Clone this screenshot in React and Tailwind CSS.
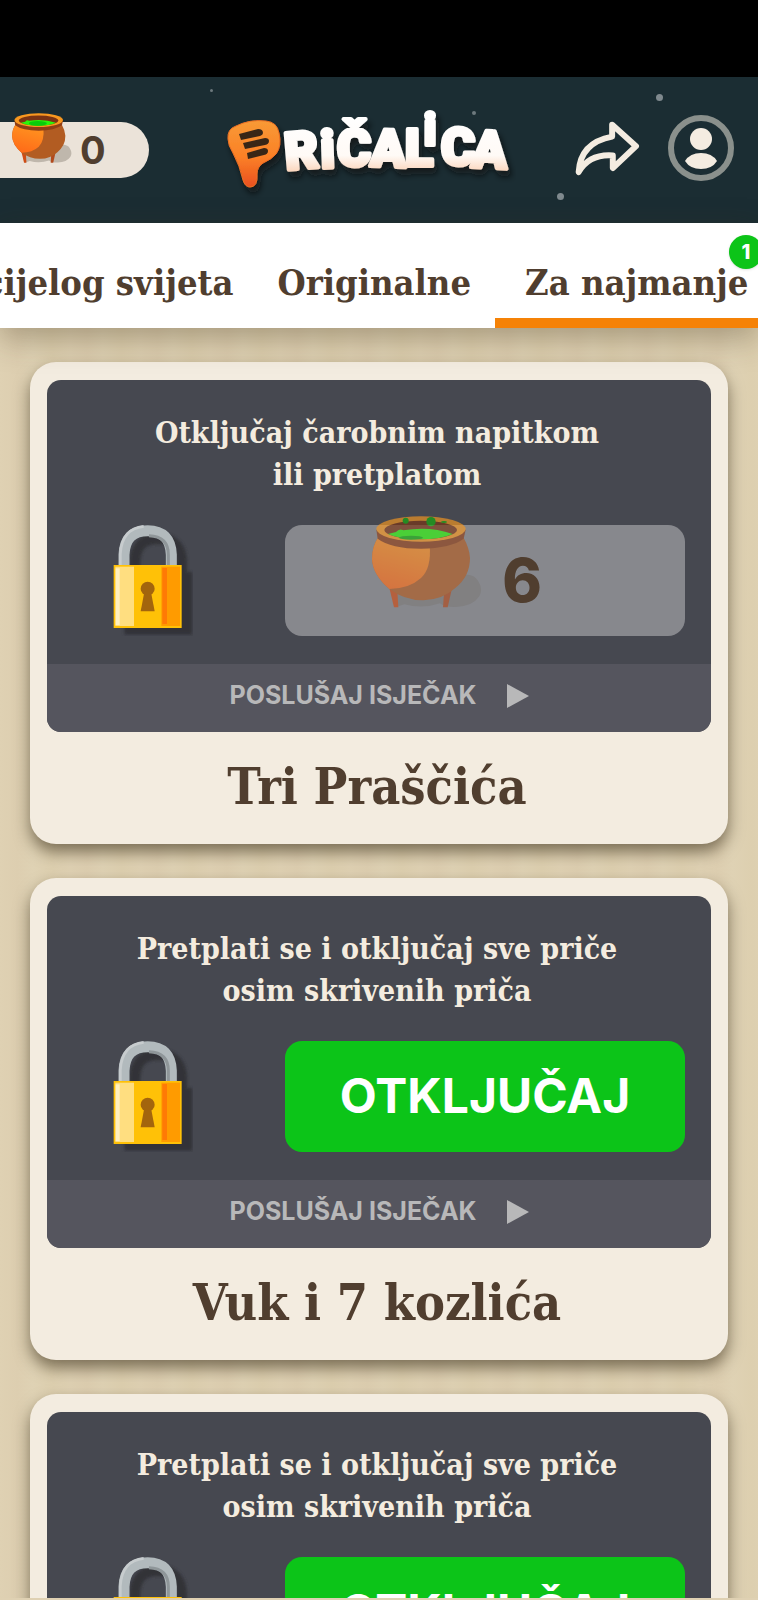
import { useId } from 'react';

const STORIES = [
  {
    title: 'Tri Praščića',
    lines: ['Otključaj čarobnim napitkom', 'ili pretplatom'],
    price: 6,
  },
  {
    title: 'Vuk i 7 kozlića',
    lines: ['Pretplati se i otključaj sve priče', 'osim skrivenih priča'],
  },
  {
    title: 'Crvenkapica',
    lines: ['Pretplati se i otključaj sve priče', 'osim skrivenih priča'],
  },
];

function Pot({ className, bubbles }) {
  const id = useId();

  return (
    <svg viewBox="38 104 330 276" className={className} aria-hidden="true">
      <defs>
        <linearGradient id={id} x1="0.6" y1="0" x2="0.3" y2="1">
          <stop offset="0" stopColor="#ff9420" />
          <stop offset="1" stopColor="#ff6a18" />
        </linearGradient>
      </defs>
      <path d="M305 280 Q345 275 357 300 Q372 325 360 345 Q340 375 290 377 Q255 378 242 366 Q190 384 135 369 L108 378 L105 330 Z" fill="#6d6558" opacity="0.35" />
      <path d="M90 320 L104 378 H117 L114 328 Z" fill="#cf4c14" />
      <path d="M277 325 L265 378 H251 L254 335 Z" fill="#b24a1c" />
      <path d="M57 168 Q38 195 38 233 Q40 280 90 323 Q135 357 192 357 Q250 355 288 320 Q332 285 332 230 Q330 200 312 168 Z" fill="#b25c22" />
      <path d="M57 168 Q38 195 38 233 Q40 280 90 323 Q150 322 185 290 Q217 260 211 190 Z" fill={`url(#${id})`} />
      <path d="M51 145 L55 172 Q95 202 185 202 Q275 200 313 172 L319 145 Z" fill="#8f3e16" />
      <ellipse cx="185" cy="143" rx="134" ry="38" fill="#f9981f" />
      <ellipse cx="184" cy="146" rx="109" ry="28" fill="#7c3413" />
      <path d="M86 158 L110 152 Q120 140 132 147 Q210 133 280 158 Q245 174 184 174 Q120 174 86 158 Z" fill="#2bf50a" />
      {bubbles ? (
        <g fill="#12b00c">
          <ellipse cx="155" cy="169" rx="36" ry="6" />
          <circle cx="139" cy="118" r="9" />
          <circle cx="215" cy="121" r="14" />
          <ellipse cx="254" cy="122" rx="9" ry="3" />
        </g>
      ) : (
        <ellipse cx="180" cy="161" rx="50" ry="13" fill="#09cb0b" />
      )}
    </svg>
  );
}

function Lock() {
  return (
    <svg viewBox="280 528 240 336" className="h-28 w-20 shrink-0" aria-hidden="true">
      <defs>
        <filter id="lockShade" x="-20%" y="-20%" width="150%" height="150%">
          <feGaussianBlur stdDeviation="4" />
        </filter>
      </defs>
      <g filter="url(#lockShade)" opacity="0.8" fill="#2d2e33">
        <rect x="314" y="672" width="204" height="188" />
        <path d="M346 680 V640 Q348 572 416 572 Q484 572 486 640 V680" fill="none" stroke="#2d2e33" strokeWidth="32" />
      </g>
      <path d="M313 652 V620 Q316 548 384 548 Q452 548 455 620 V652" fill="none" stroke="#b2babd" strokeWidth="33" />
      <path d="M302 652 V618 Q306 542 372 535" fill="none" stroke="#c7ccce" strokeWidth="8" />
      <path d="M388 563 Q446 565 446 620 V652" fill="none" stroke="#8f9699" strokeWidth="9" />
      <rect x="282" y="651" width="204" height="189" fill="#ffc107" />
      <rect x="287" y="656" width="56" height="178" fill="#ffde80" />
      <rect x="288" y="661" width="12" height="170" fill="#fff0c0" />
      <rect x="425" y="656" width="56" height="178" fill="#ff9b00" />
      <rect x="428" y="660" width="14" height="168" fill="#ff7a05" />
      <circle cx="384" cy="722" r="21" fill="#a3650d" />
      <path d="M374 732 H394 L405 790 H363 Z" fill="#a3650d" />
    </svg>
  );
}

function Logo() {
  return (
    <svg viewBox="0 0 300 110" className="h-[110px] w-[300px] shrink-0" role="img" aria-label="Pričalica">
      <defs>
        <linearGradient id="bubble" x1="0" y1="0" x2="0" y2="1">
          <stop offset="0" stopColor="#f89a35" />
          <stop offset="0.55" stopColor="#fb8027" />
          <stop offset="1" stopColor="#e9501f" />
        </linearGradient>
        <linearGradient id="cream" gradientUnits="userSpaceOnUse" x1="0" y1="20" x2="0" y2="78">
          <stop offset="0" stopColor="#fff" />
          <stop offset="0.7" stopColor="#fffaf6" />
          <stop offset="1" stopColor="#fbd3b8" />
        </linearGradient>
        <filter id="logoShade" x="-10%" y="-10%" width="130%" height="140%">
          <feDropShadow dx="3" dy="6" stdDeviation="3" floodColor="#0b1518" floodOpacity="0.7" />
        </filter>
      </defs>
      <g filter="url(#logoShade)">
        <path d="M12 44 Q11 34 20 31 Q34 24 50 26 Q61 27 63 38 Q66 51 60 59 Q56 64 47 68 Q41 72 41 79 Q42 92 34 92 Q29 92 27 85 Q24 71 17 58 Q12 50 12 44 Z" fill="url(#bubble)" stroke="#ed7024" strokeWidth="1" />
        <g fill="#392719">
          <path d="M23 39 L42 34 Q47 34 47 38 Q47 40 44 41 L25 45 Z" />
          <path d="M27 48 L49 43 Q53 43 53 46 Q53 49 49 50 L29 54 Z" />
          <path d="M31 58 L48 53 Q52 53 52 56 Q52 59 48 60 L32 64 Z" />
        </g>
      </g>
      <text
        x="70 105 121 154 189 208 225 255"
        y="75 73 71 71 71 50 70 72"
        rotate="-5 -2 0 2 0 0 0 3"
        fill="url(#cream)"
        stroke="url(#cream)"
        strokeWidth="4"
        strokeLinejoin="round"
        filter="url(#logoShade)"
        className="font-[Roboto,sans-serif] text-[52px] font-black"
      >
        RiČAL<tspan className="text-[44px]">i</tspan>CA
      </text>
    </svg>
  );
}

function ShareIcon() {
  return (
    <svg viewBox="134 162 196 164" className="h-[55px] w-[65px]" fill="none" stroke="#f4ece1" strokeWidth="18" strokeLinejoin="round" aria-hidden="true">
      <path d="M246 172 L318 237 L248 303 V265 Q177 260 145 315 Q150 226 246 208 Z" />
    </svg>
  );
}

function ProfileIcon() {
  return (
    <svg viewBox="0 0 66 66" className="size-[66px]" aria-hidden="true">
      <circle cx="33" cy="33" r="30" fill="none" stroke="#8a908c" strokeWidth="6" />
      <circle cx="33" cy="24" r="11" fill="#f4ece1" />
      <path d="M17 46 Q22 38 33 38 Q44 38 49 46 Q44 54 33 54 Q22 54 17 46 Z" fill="#f4ece1" />
    </svg>
  );
}

function Header() {
  return (
    <header className="relative flex h-[146px] shrink-0 items-center justify-between bg-[#1b2d33] pr-6">
      {/* stars scattered over the night sky */}
      <span className="absolute left-[210px] top-3 size-[3px] rounded-full bg-[#6d797e]" />
      <span className="absolute right-[95px] top-[17px] size-[7px] rounded-full bg-[#7f898e]" />
      <span className="absolute bottom-[23px] right-[194px] size-[7px] rounded-full bg-[#7f898e]" />
      <span className="absolute right-[282px] top-[34px] size-1 rounded-full bg-[#6d797e]" />

      <button className="flex h-14 w-[149px] items-center gap-2 rounded-r-full bg-[#ebe3d9] pl-3">
        <Pot className="mb-6 h-[50px] w-[60px] shrink-0" />
        <span className="font-[Inter,sans-serif] text-[38px] font-bold leading-none text-[#503e2f]">0</span>
      </button>
      <a href="#" className="ml-16">
        <Logo />
      </a>
      <div className="ml-14 flex items-center gap-7 pb-1">
        <button aria-label="Podijeli">
          <ShareIcon />
        </button>
        <button aria-label="Profil">
          <ProfileIcon />
        </button>
      </div>
    </header>
  );
}

function Tabs() {
  return (
    <nav className="relative z-10 flex h-[105px] shrink-0 whitespace-nowrap bg-white pt-3 font-['DejaVu_Serif_Condensed','DejaVu_Serif',serif] text-[36px] font-bold text-[#503e2f] shadow-[0_10px_30px_rgba(60,45,20,0.35)]">
      <button className="flex min-w-0 flex-1 items-center justify-end overflow-hidden pr-5">cijelog svijeta</button>
      <button className="shrink-0 px-6">Originalne</button>
      <button className="relative w-[263px] shrink-0 pl-[30px] text-left">
        Za najmanje
        <span className="absolute inset-x-0 bottom-0 h-[10px] bg-[#f58207]" />
        <span className="absolute -right-[5px] top-0 flex size-[34px] items-center justify-center rounded-full bg-[#0cc418] font-[Inter,sans-serif] text-xl font-extrabold text-white shadow">
          1
        </span>
      </button>
    </nav>
  );
}

function StoryCard({ story }) {
  return (
    <article className="rounded-[26px] bg-[#f3ece0] px-[17px] pt-[18px] shadow-[0_8px_16px_rgba(40,30,10,0.55)]">
      <div className="overflow-hidden rounded-[14px] bg-[#464850]">
        <p className="pr-1 pt-8 text-center font-['DejaVu_Serif_Condensed','DejaVu_Serif',serif] text-[30px] font-bold leading-[42px] text-[#f4ecdf]">
          {story.lines[0]}
          <br />
          {story.lines[1]}
        </p>
        <div className="flex items-center pb-7 pr-[26px] pt-7">
          <div className="w-[238px] shrink-0 pl-[66px]">
            <Lock />
          </div>
          {story.price ? (
            <button className="flex h-[111px] flex-1 items-center justify-center gap-5 rounded-[17px] bg-[#87888d] pr-14">
              <Pot bubbles className="mb-9 h-[92px] w-[110px] opacity-65" />
              <span className="font-[Inter,sans-serif] text-[60px] font-extrabold leading-none text-[#503e2f]">{story.price}</span>
            </button>
          ) : (
            <button className="h-[111px] flex-1 rounded-[17px] bg-[#0cc418] font-[Inter,sans-serif] text-[48px] font-bold text-white">
              OTKLJUČAJ
            </button>
          )}
        </div>
        <button className="flex h-[68px] w-full items-center justify-center gap-[30px] bg-[#55555e] pb-1 font-[Inter,sans-serif] text-[25px] font-bold text-[#b8b8b9]">
          POSLUŠAJ ISJEČAK
          <svg viewBox="0 0 22 24" className="h-6 w-[22px]" aria-hidden="true">
            <path d="M0 0 L22 12 L0 24 Z" fill="currentColor" />
          </svg>
        </button>
      </div>
      <h2 className="flex h-[112px] items-center justify-center pb-1 pr-1 font-['DejaVu_Serif_Condensed','DejaVu_Serif',serif] text-[50px] font-bold text-[#503e2f]">
        {story.title}
      </h2>
    </article>
  );
}

export default function App() {
  return (
    <div className="flex h-screen flex-col overflow-hidden bg-[#dfd1b3] pb-[2px]">
      <div className="h-[77px] shrink-0 bg-black" />
      <Header />
      <Tabs />
      <main className="min-h-0 flex-1 overflow-hidden bg-[repeating-linear-gradient(90deg,#dfd1b3_0px,#ddceb0_17px,#dfd2b4_33px,#ddcfaf_52px,#dfd1b3_70px)]">
        <div className="flex flex-col gap-[34px] px-[30px] py-[34px]">
          {STORIES.map((story) => (
            <StoryCard key={story.title} story={story} />
          ))}
        </div>
      </main>
    </div>
  );
}
